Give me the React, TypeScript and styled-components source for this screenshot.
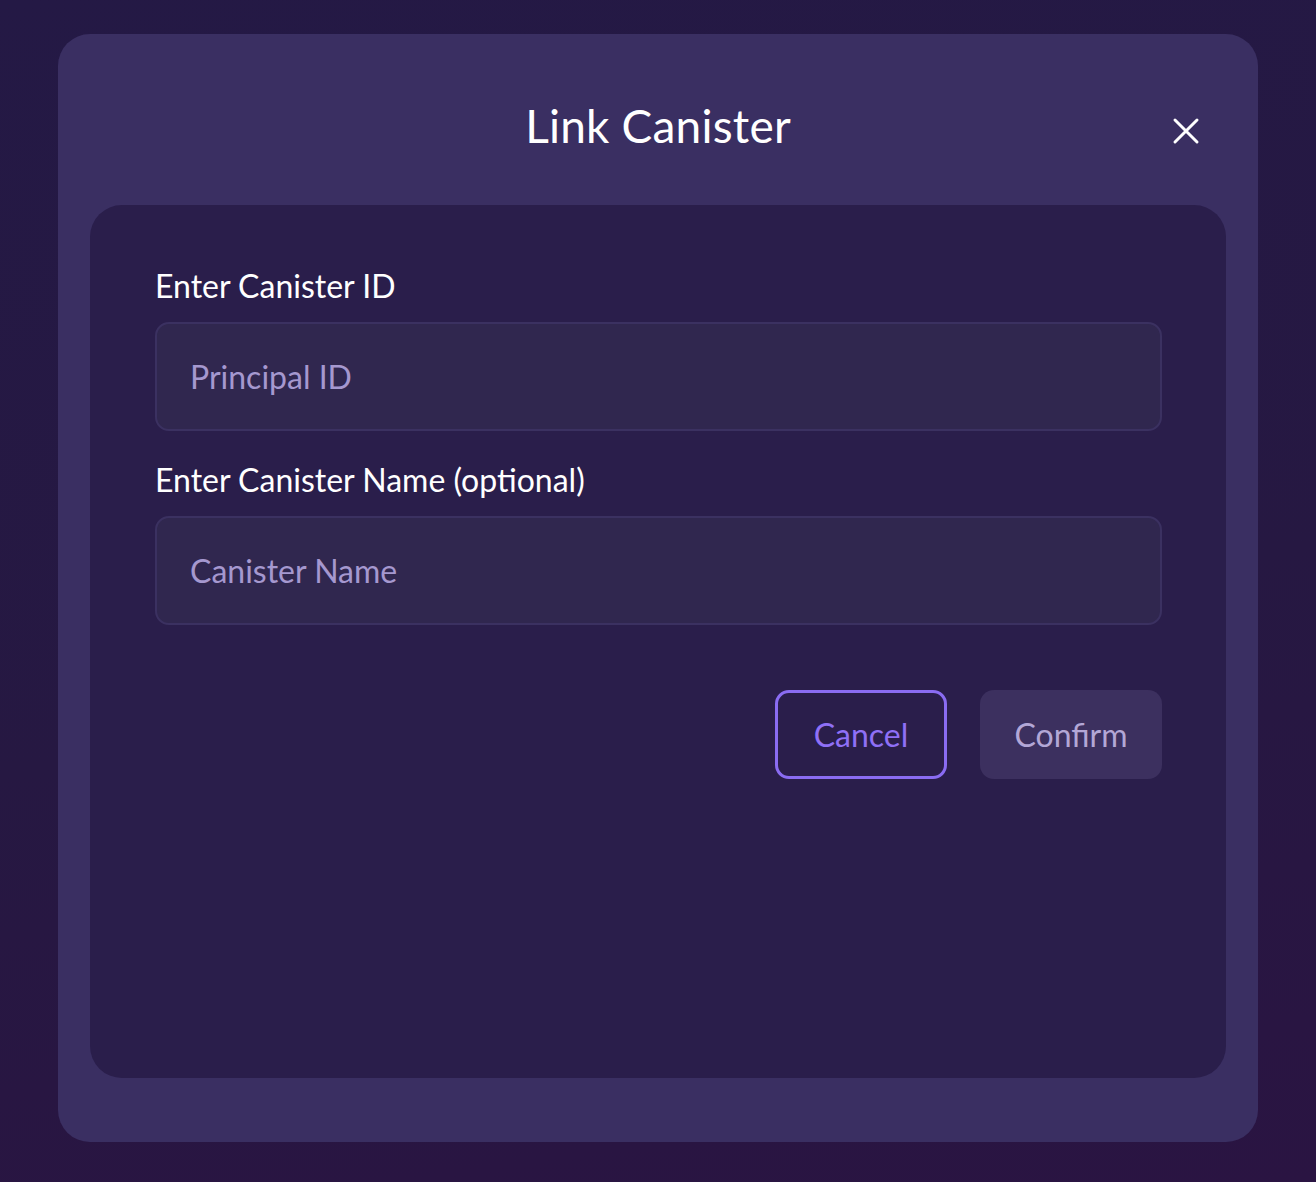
import React from 'react';
import styled, { createGlobalStyle } from 'styled-components';

const GlobalStyle = createGlobalStyle`
  html, body {
    margin: 0;
    padding: 0;
  }
  body {
    width: 1316px;
    height: 1182px;
    overflow: hidden;
    font-family: 'Lato', 'Noto Sans', sans-serif;
    background: linear-gradient(170deg, #241945 0%, #261842 55%, #2a1442 100%);
  }
`;

const Backdrop = styled.div`
  box-sizing: border-box;
  width: 1316px;
  height: 1182px;
  padding: 34px 58px 40px;
`;

const Modal = styled.div`
  box-sizing: border-box;
  width: 1200px;
  height: 1108px;
  background: #3a2f62;
  border-radius: 32px;
  padding: 0 32px 64px;
  display: flex;
  flex-direction: column;
`;

const Header = styled.div`
  position: relative;
  height: 171px;
  display: flex;
  justify-content: center;
  align-items: flex-start;
  padding-top: 64px;
  box-sizing: border-box;
`;

const Title = styled.h1`
  margin: 0;
  font-size: 46px;
  line-height: 56px;
  font-weight: 400;
  color: #ffffff;
  letter-spacing: 0.2px;
`;

const CloseButton = styled.button`
  position: absolute;
  right: 26px;
  top: 83px;
  width: 28px;
  height: 28px;
  padding: 0;
  border: none;
  background: transparent;
  cursor: pointer;
  display: flex;
  align-items: center;
  justify-content: center;
`;

const Panel = styled.div`
  flex: 1;
  background: #2a1e4b;
  border-radius: 32px;
  padding: 62px 64px 0 65px;
  display: flex;
  flex-direction: column;
  gap: 30px;
`;

const Field = styled.div`
  display: flex;
  flex-direction: column;
`;

const Label = styled.label`
  font-size: 32px;
  line-height: 38px;
  color: #ffffff;
  margin-bottom: 17px;
`;

const Input = styled.input`
  box-sizing: border-box;
  width: 100%;
  height: 109px;
  border: 2px solid #3b3161;
  border-radius: 14px;
  background: #30274f;
  padding: 0 33px;
  font-family: inherit;
  font-size: 32px;
  color: #ffffff;
  outline: none;

  &::placeholder {
    color: #a598cf;
  }
`;

const Actions = styled.div`
  display: flex;
  justify-content: flex-end;
  gap: 33px;
  margin-top: 35px;
`;

const Button = styled.button<{ $variant: 'outline' | 'muted' }>`
  box-sizing: border-box;
  height: 89px;
  width: ${p => (p.$variant === 'outline' ? '172px' : '182px')};
  border-radius: 14px;
  font-family: inherit;
  font-size: 32px;
  cursor: pointer;
  padding: 0;
  border: ${p => (p.$variant === 'outline' ? '3px solid #8a6cf2' : 'none')};
  background: ${p => (p.$variant === 'outline' ? 'transparent' : '#3c305f')};
  color: ${p => (p.$variant === 'outline' ? '#8f70f6' : '#b3a7d6')};
`;

const CloseIcon = () => (
  <svg width="28" height="28" viewBox="0 0 28 28" fill="none">
    <path d="M3 3 L25 25 M25 3 L3 25" stroke="#ffffff" strokeWidth="3" strokeLinecap="round" />
  </svg>
);

export default function App() {
  return (
    <>
      <GlobalStyle />
      <Backdrop>
        <Modal>
          <Header>
            <Title>Link Canister</Title>
            <CloseButton aria-label="Close">
              <CloseIcon />
            </CloseButton>
          </Header>
          <Panel>
            <Field>
              <Label>Enter Canister ID</Label>
              <Input placeholder="Principal ID" />
            </Field>
            <Field>
              <Label>Enter Canister Name (optional)</Label>
              <Input placeholder="Canister Name" />
            </Field>
            <Actions>
              <Button $variant="outline">Cancel</Button>
              <Button $variant="muted">Confirm</Button>
            </Actions>
          </Panel>
        </Modal>
      </Backdrop>
    </>
  );
}
